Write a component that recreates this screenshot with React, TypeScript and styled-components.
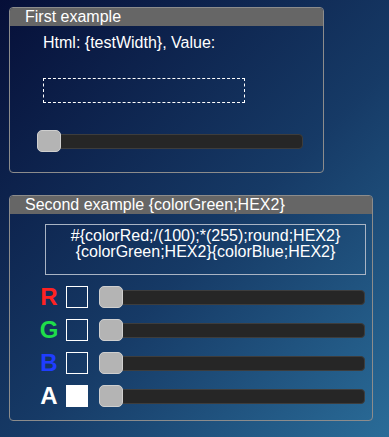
import styled, { createGlobalStyle } from 'styled-components';

const GlobalStyle = createGlobalStyle`
  html, body {
    margin: 0;
    height: 100%;
  }

  body {
    background: linear-gradient(135deg, #060f38 0%, #163a66 55%, #2a6c98 100%);
    font-family: 'Liberation Sans', Arial, sans-serif;
    color: #ffffff;
  }
`;

const Page = styled.main`
  display: flex;
  flex-direction: column;
  align-items: flex-start;
  gap: 22px;
  padding: 7px 0 0 9px;
`;

const Panel = styled.section<{ $width: number }>`
  width: ${(p) => p.$width}px;
  box-sizing: border-box;
  border: 1px solid #8c8c8c;
  border-radius: 4px;
  overflow: hidden;
`;

const Header = styled.div`
  height: 18px;
  line-height: 18px;
  background: #666666;
  font-size: 16px;
  padding-left: 15px;
  white-space: nowrap;
`;

const FirstBody = styled.div`
  display: flex;
  flex-direction: column;
  align-items: flex-start;
  padding: 8px 0 20px 0;
`;

const Label = styled.div`
  font-size: 16px;
  line-height: 18px;
  margin-left: 33px;
`;

const DashedBox = styled.div`
  width: 202px;
  height: 25px;
  box-sizing: border-box;
  border: 1px dashed #ffffff;
  margin: 26px 0 0 33px;
`;

const Slider = styled.div<{ $width: number }>`
  position: relative;
  width: ${(p) => p.$width}px;
  height: 22px;
  box-sizing: border-box;
  padding-top: 4px;
  flex-shrink: 0;
`;

const Track = styled.div`
  height: 15px;
  box-sizing: border-box;
  background: #262626;
  border: 1px solid #3d3d3d;
  border-radius: 4px;
`;

const Thumb = styled.div`
  position: absolute;
  left: 0;
  top: 0;
  width: 24px;
  height: 22px;
  box-sizing: border-box;
  background: #b4b4b4;
  border: 1px solid #cfcfcf;
  border-radius: 5px;
`;

const FirstSlider = styled.div`
  margin: 27px 0 0 27px;
`;

const SecondBody = styled.div`
  display: flex;
  flex-direction: column;
  padding: 10px 6px 13px 0;
`;

const Formula = styled.div`
  margin: 0 0 0 35px;
  height: 51px;
  box-sizing: border-box;
  border: 1px solid #a9b4c4;
  padding-top: 3px;
  font-size: 16px;
  line-height: 16px;
  text-align: center;
  white-space: nowrap;
`;

const Rows = styled.div`
  display: flex;
  flex-direction: column;
  gap: 11px;
  margin: 11px 0 0 28px;
`;

const Row = styled.div`
  display: flex;
  align-items: center;
  height: 22px;
`;

const Channel = styled.span<{ $color: string }>`
  width: 22px;
  text-align: center;
  font-size: 24px;
  font-weight: 700;
  line-height: 22px;
  color: ${(p) => p.$color};
`;

const Swatch = styled.div<{ $filled?: boolean }>`
  width: 22px;
  height: 22px;
  box-sizing: border-box;
  border: 1px solid #ffffff;
  background: ${(p) => (p.$filled ? '#ffffff' : 'transparent')};
  margin: 0 11px 0 6px;
`;

const RangeSlider = ({ width }: { width: number }) => (
  <Slider $width={width}>
    <Track />
    <Thumb />
  </Slider>
);

const channels = [
  { name: 'R', color: '#ff2222' },
  { name: 'G', color: '#1fdd4a' },
  { name: 'B', color: '#1f3dff' },
  { name: 'A', color: '#ffffff', filled: true },
];

export default function App() {
  return (
    <>
      <GlobalStyle />
      <Page>
        <Panel $width={315}>
          <Header>First example</Header>
          <FirstBody>
            <Label>Html: {'{testWidth}'}, Value:</Label>
            <DashedBox />
            <FirstSlider>
              <RangeSlider width={266} />
            </FirstSlider>
          </FirstBody>
        </Panel>

        <Panel $width={364}>
          <Header>Second example {'{colorGreen;HEX2}'}</Header>
          <SecondBody>
            <Formula>
              #{'{colorRed;/(100);*(255);round;HEX2}'}
              <br />
              {'{colorGreen;HEX2}{colorBlue;HEX2}'}
            </Formula>
            <Rows>
              {channels.map((c) => (
                <Row key={c.name}>
                  <Channel $color={c.color}>{c.name}</Channel>
                  <Swatch $filled={c.filled} />
                  <RangeSlider width={266} />
                </Row>
              ))}
            </Rows>
          </SecondBody>
        </Panel>
      </Page>
    </>
  );
}
